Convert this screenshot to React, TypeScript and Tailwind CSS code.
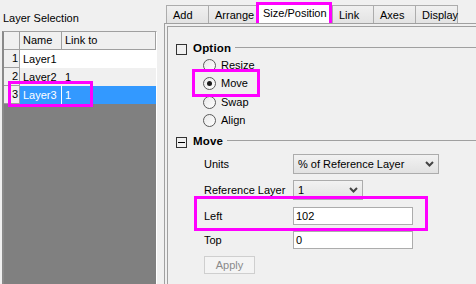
import React from 'react'

const tabs = [
  { name: 'Add', w: 'w-[42px]' },
  { name: 'Arrange', w: 'w-[48px]' },
  { name: 'Size/Position', w: 'w-[76px]', active: true },
  { name: 'Link', w: 'w-[41px]' },
  { name: 'Axes', w: 'w-[42px]' },
  { name: 'Display', w: 'w-[43px]', last: true },
]

const layers = [
  { n: 1, name: 'Layer1', link: '', bg: 'bg-white text-black' },
  { n: 2, name: 'Layer2', link: '1', bg: 'bg-[#f0f0f0] text-black' },
  { n: 3, name: 'Layer3', link: '1', bg: 'bg-[#3399ff] text-white', selected: true },
]

const radios = [
  { label: 'Resize' },
  { label: 'Move', checked: true },
  { label: 'Swap' },
  { label: 'Align' },
]

function Chevron() {
  return (
    <svg width="9" height="6" viewBox="0 0 9 6" className="text-[#444]">
      <path d="M1 1 L4.5 4.5 L8 1" fill="none" stroke="currentColor" strokeWidth="2" />
    </svg>
  )
}

function GroupHead({ label, minus }: { label: string; minus?: boolean }) {
  return (
    <div className="flex items-center h-[14px]">
      <div className="ml-[8px] w-[11px] h-[11px] border border-[#333] flex items-center justify-center">
        {minus && <div className="w-[7px] h-px bg-black" />}
      </div>
      <span className="ml-[6px] font-bold text-[11.5px] tracking-[0.2px]">{label}</span>
      <div className="flex-1 h-px bg-[#a0a0a0] ml-[4px] mb-[3px]" />
    </div>
  )
}

export default function App() {
  return (
    <div className="relative w-[476px] h-[284px] overflow-hidden bg-[#f0f0f0] flex font-['Liberation_Sans',Arial,sans-serif] text-[11px] text-black leading-none">
      {/* left pane */}
      <div className="w-[164px] h-full flex flex-col">
        <div className="h-[31px] flex items-center pl-[3px] pt-[5px]">Layer Selection</div>
        <div className="ml-[2px] w-[155px] flex-1 flex flex-col border-l-2 border-t border-l-[#8a8a8a] border-t-[#a0a0a0] border-r border-r-white bg-[#808080]">
          <div className="flex h-[18px] bg-[#f0f0f0] border-b border-[#a0a0a0]">
            <div className="w-[16px] border-r border-[#a0a0a0]" />
            <div className="w-[42px] border-r border-[#a0a0a0] flex items-center pl-[3px]">Name</div>
            <div className="flex-1 border-r border-[#a0a0a0] flex items-center pl-[3px]">Link to</div>
          </div>
          {layers.map((l) => (
            <div key={l.n} className={`flex h-[18px] ${l.bg}`}>
              <div className="w-[16px] bg-[#f0f0f0] text-black border-r border-b border-[#a0a0a0] flex items-center justify-end pr-[1px]">
                {l.n}
              </div>
              <div className={`w-[42px] flex items-center pl-[3px] border-r ${l.selected ? 'border-white' : 'border-transparent'}`}>
                {l.name}
              </div>
              <div className="flex-1 flex items-center pl-[3px]">{l.link}</div>
            </div>
          ))}
        </div>
      </div>

      {/* right pane */}
      <div className="flex-1 h-full flex flex-col">
        <div className="h-[23px] flex items-end pl-[2px]">
          {tabs.map((t) =>
            t.active ? (
              <div key={t.name} className={`${t.w} h-[21px] border-[3px] border-b-0 border-[#ff00ff] bg-white flex items-center pl-[4px] pb-[1px]`}>
                {t.name}
              </div>
            ) : (
              <div
                key={t.name}
                className={`${t.w} h-[18px] border-t border-l ${t.last ? 'border-r' : ''} border-[#acacac] bg-gradient-to-b from-[#f0f0f0] to-[#e3e3e3] flex items-center pl-[6px] pt-[1px]`}
              >
                {t.name}
              </div>
            ),
          )}
        </div>
        <div className="flex-1 border-t border-l border-[#a0a0a0] pl-[2px] pt-[2px]">
          <div className="h-full border-t border-l border-[#a0a0a0] flex flex-col">
            <div className="mt-[15px]">
              <GroupHead label="Option" />
            </div>
            {radios.map((r) => (
              <div key={r.label} className="flex items-center h-[18.5px] pl-[35px]">
                <div className="w-[13px] h-[13px] rounded-full border border-[#5a5a5a] bg-gradient-to-br from-[#e8e8e8] to-white flex items-center justify-center">
                  {r.checked && <div className="w-[5px] h-[5px] rounded-full bg-[#1a1a1a]" />}
                </div>
                <span className="ml-[5px]">{r.label}</span>
              </div>
            ))}
            <div className="mt-[5px]">
              <GroupHead label="Move" minus />
            </div>
            <div className="mt-[5px] flex items-center h-[20px] pl-[36px]">
              <span className="w-[89px]">Units</span>
              <div className="w-[146px] h-[20px] border border-[#acacac] bg-gradient-to-b from-[#f2f2f2] to-[#e2e2e2] flex items-center pl-[4px] pr-[4px] justify-between">
                <span>% of Reference Layer</span>
                <Chevron />
              </div>
            </div>
            <div className="mt-[6px] flex items-center h-[20px] pl-[36px]">
              <span className="w-[89px]">Reference Layer</span>
              <div className="w-[70px] h-[20px] border border-[#acacac] bg-gradient-to-b from-[#f2f2f2] to-[#e2e2e2] flex items-center pl-[4px] pr-[4px] justify-between">
                <span>1</span>
                <Chevron />
              </div>
            </div>
            <div className="mt-[7px] flex items-center h-[18px] pl-[36px]">
              <span className="w-[89px]">Left</span>
              <div className="w-[120px] h-[18px] border border-[#acacac] bg-white flex items-center pl-[2px]">102</div>
            </div>
            <div className="mt-[6px] flex items-center h-[18px] pl-[36px]">
              <span className="w-[89px]">Top</span>
              <div className="w-[120px] h-[18px] border border-[#acacac] bg-white flex items-center pl-[2px]">0</div>
            </div>
            <div className="mt-[7px] pl-[36px]">
              <div className="w-[51px] h-[18px] border border-[#cfcfcf] bg-[#f4f4f4] text-[#8a8a8a] flex items-center justify-center">
                Apply
              </div>
            </div>
          </div>
        </div>
      </div>

      {/* highlight annotations */}
      <div className="absolute left-[8px] top-[81px] w-[85px] h-[26px] border-[3px] border-[#ff00ff]" />
      <div className="absolute left-[192px] top-[69px] w-[68px] h-[28px] border-[3px] border-[#ff00ff]" />
      <div className="absolute left-[194px] top-[196px] w-[234px] h-[35px] border-[3px] border-[#ff00ff]" />
    </div>
  )
}
